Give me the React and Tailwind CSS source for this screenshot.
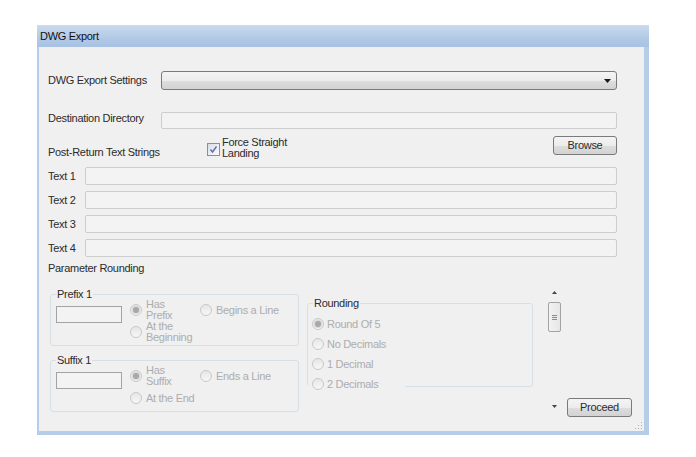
import React from 'react';

const btn =
  'rounded-[3px] border border-[#7a7a7a] bg-[linear-gradient(#f4f4f4,#ececec_50%,#dedede_50%,#d2d2d2)] flex items-center justify-center';

function Radio({ checked }) {
  return (
    <div className="w-[12px] h-[12px] shrink-0 rounded-full border border-[#c8c8c8] bg-[linear-gradient(#e6e6e6,#f7f7f7)] flex items-center justify-center">
      {checked && <div className="w-[6px] h-[6px] rounded-full bg-[#a8a8a8] ring-1 ring-[#d6d6d6]" />}
    </div>
  );
}

function Option({ lines, checked }) {
  return (
    <div className="flex items-center h-[22px] gap-[4px]">
      <Radio checked={checked} />
      <div className="leading-[11px] text-[#adadad]">
        {lines.map((l) => (
          <div key={l}>{l}</div>
        ))}
      </div>
    </div>
  );
}

function GroupBox({ title, className, children }) {
  return (
    <div className={'relative border border-[#d5dfe5] rounded-[3px] ' + className}>
      <span className="absolute top-[-7px] left-[5px] px-[1px] bg-[#f0f0f0] leading-[13px] text-[#2b2b2b]">{title}</span>
      {children}
    </div>
  );
}

function AffixBox({ title, first, second, third }) {
  return (
    <GroupBox title={title} className="h-[52px]">
      <div className="flex items-start pt-[4px]">
        <div className="ml-[5px] mt-[7px] w-[66px] h-[17px] border border-[#a3a3a3] bg-[#f3f3f3]" />
        <div className="ml-[8px] w-[70px] flex flex-col">
          <Option lines={first} checked />
          <Option lines={second} />
        </div>
        <Option lines={third} />
      </div>
    </GroupBox>
  );
}

function TextRow({ label }) {
  return (
    <div className="flex items-center h-[18px] mt-[6px] pr-[27px]">
      <span className="w-[37px] shrink-0">{label}</span>
      <div className="flex-1 h-full rounded-[2px] border border-[#cdcdcd] bg-[#f3f3f3]" />
    </div>
  );
}

export default function App() {
  return (
    <div className="min-h-screen bg-white pl-[37px] pt-[25px] text-[11px] tracking-[-0.3px] text-[#2b2b2b] font-['Liberation_Sans',Arial,sans-serif]">
      <div className="w-[612px] h-[410px] flex flex-col bg-[#b5cde9]">
        <div className="h-[22px] shrink-0 flex items-center pl-[3px] pt-[1px] bg-[linear-gradient(#cadbef,#b2c9e6_60%,#a9c2e2)] text-[#111]">
          DWG Export
        </div>
        <div className="relative flex-1 ml-[2px] mr-[5px] mb-[4px] bg-[#f0f0f0] flex flex-col pl-[9px]">
          <div className="flex items-center mt-[24px] h-[19px] pr-[27px]">
            <span className="w-[113px] shrink-0">DWG Export Settings</span>
            <div className={btn + ' flex-1 h-full !justify-end pr-[5px]'}>
              <svg width="7" height="4" viewBox="0 0 7 4">
                <path d="M0 0h7L3.5 4z" fill="#1a1a1a" />
              </svg>
            </div>
          </div>

          <div className="flex items-center mt-[22px] h-[17px] pr-[27px]">
            <span className="w-[113px] shrink-0 -mt-[4px]">Destination Directory</span>
            <div className="flex-1 h-full rounded-[2px] border border-[#cdcdcd] bg-[#f3f3f3]" />
          </div>

          <div className="flex items-start mt-[7px] h-[22px] pr-[27px]">
            <span className="w-[159px] shrink-0 mt-[8px]">Post-Return Text Strings</span>
            <div className="mt-[7px] w-[13px] h-[13px] shrink-0 border border-[#8e8f8f] bg-[linear-gradient(135deg,#d8dde6,#fbfbfb)] flex items-center justify-center">
              <svg width="9" height="9" viewBox="0 0 9 9">
                <path d="M1.5 4.5l2 2.5 4-5.5" stroke="#5b6fb3" strokeWidth="1.4" fill="none" />
              </svg>
            </div>
            <div className="ml-[2px] mt-[1px] leading-[11px]">
              <div>Force Straight</div>
              <div>Landing</div>
            </div>
            <div className={btn + ' ml-auto w-[64px] h-[19px]'}>Browse</div>
          </div>

          <div className="mt-[3px]">
            <TextRow label="Text 1" />
            <TextRow label="Text 2" />
            <TextRow label="Text 3" />
            <TextRow label="Text 4" />
          </div>

          <div className="mt-[5px] leading-[13px]">Parameter Rounding</div>

          <div className="flex items-start mt-[8px]">
            <div className="w-[513px] h-[132px] flex">
              <div className="flex-1 flex items-start">
                <div className="ml-[2px] mt-[11px] w-[249px] flex flex-col gap-[14px]">
                  <AffixBox title="Prefix 1" first={['Has', 'Prefix']} second={['At the', 'Beginning']} third={['Begins a Line']} />
                  <AffixBox title="Suffix 1" first={['Has', 'Suffix']} second={['At the End']} third={['Ends a Line']} />
                </div>
                <GroupBox title="Rounding" className="ml-[8px] mt-[20px] w-[226px] h-[84px]">
                  <div className="flex flex-col pt-[10px]">
                    {['Round Of 5', 'No Decimals', '1 Decimal', '2 Decimals'].map((t, i) => (
                      <div key={t} className={'flex items-center h-[20px] pl-[4px] gap-[3px] ' + (i === 3 ? 'w-[97px] bg-[#f0f0f0]' : '')}>
                        <Radio checked={i === 0} />
                        <span className="text-[#adadad]">{t}</span>
                      </div>
                    ))}
                  </div>
                </GroupBox>
              </div>
              <div className="w-[14px] h-full flex flex-col items-center">
                <div className="h-[18px] flex items-center">
                  <svg width="5" height="3" viewBox="0 0 5 3">
                    <path d="M0 3h5L2.5 0z" fill="#444" />
                  </svg>
                </div>
                <div className="w-[13px] h-[30px] mt-[1px] rounded-[2px] border border-[#a3a3a3] bg-[linear-gradient(90deg,#f3f3f3,#e6e6e6)] flex flex-col items-center justify-center gap-[1px]">
                  <div className="w-[5px] h-[1px] bg-[#8a8a8a]" />
                  <div className="w-[5px] h-[1px] bg-[#8a8a8a]" />
                  <div className="w-[5px] h-[1px] bg-[#8a8a8a]" />
                </div>
                <div className="mt-auto h-[18px] flex items-center">
                  <svg width="5" height="3" viewBox="0 0 5 3">
                    <path d="M0 0h5L2.5 3z" fill="#444" />
                  </svg>
                </div>
              </div>
            </div>
            <div className={btn + ' ml-[6px] mt-[115px] w-[65px] h-[19px]'}>Proceed</div>
          </div>

          <svg className="absolute bottom-[1px] right-[1px]" width="10" height="10" viewBox="0 0 10 10">
            {[[8, 2], [8, 5], [5, 5], [8, 8], [5, 8], [2, 8]].map(([x, y]) => (
              <rect key={x + '-' + y} x={x} y={y} width="1" height="1" fill="#b0b0b0" />
            ))}
          </svg>
        </div>
      </div>
    </div>
  );
}
